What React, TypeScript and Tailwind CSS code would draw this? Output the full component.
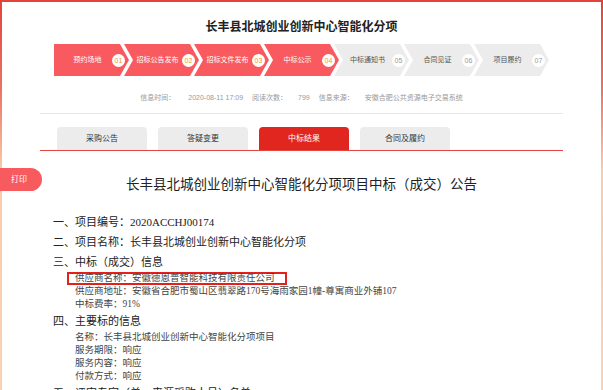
import React from "react";

const steps = [
  { label: "预约场地", num: "01", done: true },
  { label: "招标公告发布", num: "02", done: true },
  { label: "招标文件发布", num: "03", done: true },
  { label: "中标公示", num: "04", done: true },
  { label: "中标通知书", num: "05", done: false },
  { label: "合同见证", num: "06", done: false },
  { label: "项目履约", num: "07", done: false },
];

const tabs = ["采购公告", "答疑变更", "中标结果", "合同及履约"];

const sans = "font-['Liberation_Sans','Noto_Sans_CJK_SC',sans-serif]";
const serif = "font-['Liberation_Serif','Noto_Sans_CJK_SC',serif]";

export default function App() {
  return (
    <div className="relative w-[603px] h-[390px] overflow-hidden bg-[linear-gradient(to_bottom,#e2433a_0px,#ea7464_90px,#f8cbab_170px,#f9d2b4_390px)] pt-[2px] px-[2px]">
      <div className={`h-full bg-white ${sans}`}>
        {/* Title */}
        <div className="pt-[17px] text-center text-[12px] leading-[16px] font-bold text-[#222]">
          长丰县北城创业创新中心智能化分项
        </div>

        {/* Steps */}
        <div className="mt-[9px] flex justify-center">
          {steps.map((s, i) => (
            <div
              key={s.num}
              className={`flex h-[32px] w-[75px] shrink-0 items-center ${
                i === 0
                  ? "[clip-path:polygon(0_0,66px_0,75px_50%,66px_100%,0_100%)]"
                  : "-ml-[5px] [clip-path:polygon(0_0,66px_0,75px_50%,66px_100%,0_100%,9px_50%)]"
              } ${s.done ? "bg-[#f85a60] text-white" : "bg-[#ececec] text-[#555]"}`}
            >
              <span className="flex-1 pl-[9px] text-center text-[7px] leading-[10px] whitespace-nowrap">
                {s.label}
              </span>
              <span
                className={`mr-[4px] flex h-[13px] w-[13px] items-center justify-center rounded-full bg-white text-[7px] leading-none ${
                  s.done ? "text-[#f29a2e]" : "text-[#999]"
                }`}
              >
                {s.num}
              </span>
            </div>
          ))}
        </div>

        <div className="mx-[38px]">
          {/* Info line */}
          <div className="mt-[16px] flex justify-center border-b border-[#e8e8e8] pb-[9px] text-[7px] leading-[12px] text-[#999] whitespace-nowrap">
            <span>信息时间：</span>
            <span className="ml-[13px]">2020-08-11 17:09</span>
            <span className="ml-[9px]">阅读次数：</span>
            <span className="ml-[11px]">799</span>
            <span className="ml-[9px]">信息来源：</span>
            <span className="ml-[11px]">安徽合肥公共资源电子交易系统</span>
          </div>

          {/* Tabs */}
          <div className="mt-[13px] flex gap-[11px] border-b border-[#e4473f] pl-[17px]">
            {tabs.map((t) => (
              <div
                key={t}
                className={`h-[23px] w-[90px] rounded-t-[4px] text-center text-[8px] leading-[23px] ${
                  t === "中标结果" ? "bg-[#e0261f] text-white" : "bg-[#ececec] text-[#333]"
                }`}
              >
                {t}
              </div>
            ))}
          </div>

          {/* Heading */}
          <div className={`mt-[24px] text-center text-[13.5px] leading-[20px] text-[#222] ${serif}`}>
            长丰县北城创业创新中心智能化分项项目中标（成交）公告
          </div>

          {/* Body */}
          <div className={`mt-[17px] pl-[13px] text-[11px] leading-[20px] text-[#222] ${serif}`}>
            <div>一、项目编号：2020ACCHJ00174</div>
            <div>二、项目名称：长丰县北城创业创新中心智能化分项</div>
            <div>三、中标（成交）信息</div>
            <div className="text-[9.5px] leading-[13px] text-[#444]">
              <div className="ml-[14px] h-[13px] w-[220px] border-2 border-[#e3201c] px-[6px] leading-[9px] whitespace-nowrap">
                供应商名称：安徽德恩普智能科技有限责任公司
              </div>
              <div className="pl-[22px] whitespace-nowrap">
                供应商地址：安徽省合肥市蜀山区翡翠路170号海雨家园1幢-尊寓商业外铺107
              </div>
              <div className="pl-[22px]">中标费率：91%</div>
            </div>
            <div>四、主要标的信息</div>
            <div className="pl-[22px] text-[9.5px] leading-[13px] text-[#444]">
              <div>名称：长丰县北城创业创新中心智能化分项项目</div>
              <div>服务期限：响应</div>
              <div>服务内容：响应</div>
              <div>付款方式：响应</div>
            </div>
            <div>五、评审专家（单一来源采购人员）名单</div>
          </div>
        </div>
      </div>

      {/* Print button */}
      <button
        className={`absolute left-0 top-[168px] h-[23px] w-[42px] rounded-r-full bg-[#f75a5f] pr-[4px] text-[8px] text-white ${sans}`}
      >
        打印
      </button>
    </div>
  );
}
